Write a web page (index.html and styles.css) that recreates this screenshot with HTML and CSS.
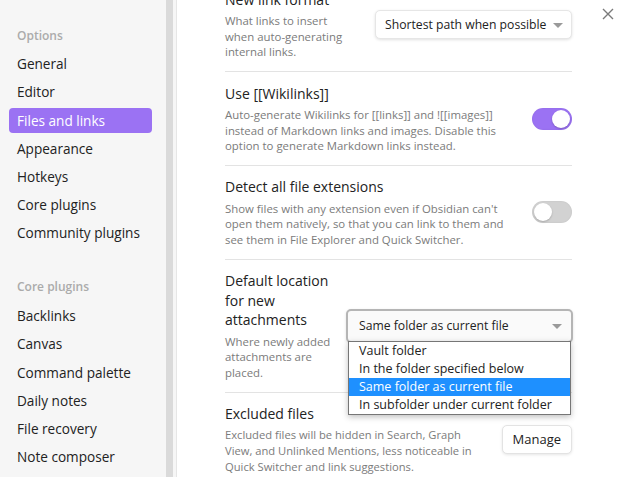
FILE: index.html
```html
<!DOCTYPE html>
<html>
<head>
<meta charset="utf-8">
<link rel="stylesheet" href="styles.css">
</head>
<body>
<div class="app">
  <nav class="sidebar">
    <div class="group">
      <div class="group-title">Options</div>
      <div class="nav-item">General</div>
      <div class="nav-item">Editor</div>
      <div class="nav-item active">Files and links</div>
      <div class="nav-item">Appearance</div>
      <div class="nav-item">Hotkeys</div>
      <div class="nav-item">Core plugins</div>
      <div class="nav-item">Community plugins</div>
    </div>
    <div class="group">
      <div class="group-title">Core plugins</div>
      <div class="nav-item">Backlinks</div>
      <div class="nav-item">Canvas</div>
      <div class="nav-item">Command palette</div>
      <div class="nav-item">Daily notes</div>
      <div class="nav-item">File recovery</div>
      <div class="nav-item">Note composer</div>
    </div>
  </nav>
  <div class="scrollbar"></div>
  <div class="gutter"></div>
  <main class="content">
    <div class="settings">
      <div class="setting first">
        <div class="info w1">
          <div class="name">New link format</div>
          <div class="desc">What links to insert when auto-generating internal links.</div>
        </div>
        <div class="control">
          <div class="select">Shortest path when possible<span class="caret"></span></div>
        </div>
      </div>
      <div class="setting">
        <div class="info">
          <div class="name">Use [[Wikilinks]]</div>
          <div class="desc">Auto-generate Wikilinks for [[links]] and ![[images]] instead of Markdown links and images. Disable this option to generate Markdown links instead.</div>
        </div>
        <div class="control">
          <div class="toggle on"><span class="knob"></span></div>
        </div>
      </div>
      <div class="setting">
        <div class="info">
          <div class="name">Detect all file extensions</div>
          <div class="desc">Show files with any extension even if Obsidian can't open them natively, so that you can link to them and see them in File Explorer and Quick Switcher.</div>
        </div>
        <div class="control">
          <div class="toggle"><span class="knob"></span></div>
        </div>
      </div>
      <div class="setting">
        <div class="info w4">
          <div class="name">Default location for new attachments</div>
          <div class="desc">Where newly added attachments are placed.</div>
        </div>
        <div class="control">
          <div class="select wide focused">Same folder as current file<span class="caret"></span>
            <ul class="options">
              <li>Vault folder</li>
              <li>In the folder specified below</li>
              <li class="selected">Same folder as current file</li>
              <li>In subfolder under current folder</li>
            </ul>
          </div>
        </div>
      </div>
      <div class="setting">
        <div class="info">
          <div class="name">Excluded files</div>
          <div class="desc lines">Excluded files will be hidden in Search, Graph<br>View, and Unlinked Mentions, less noticeable in<br>Quick Switcher and link suggestions.</div>
        </div>
        <div class="control">
          <button class="button">Manage</button>
        </div>
      </div>
    </div>
  </main>
  <button class="close" aria-label="Close">
    <svg width="12" height="12" viewBox="0 0 12 12"><path d="M1 1L11 11M11 1L1 11" stroke="#7a7a7a" stroke-width="1.4" fill="none"/></svg>
  </button>
</div>
</body>
</html>
```

FILE: styles.css
```css
html, body {
  margin: 0;
  padding: 0;
  width: 620px;
  height: 477px;
  overflow: hidden;
  background: #ffffff;
  font-family: "Open Sans", "Noto Sans", sans-serif;
  color: #222222;
}

.app {
  position: relative;
  display: flex;
  width: 620px;
  height: 477px;
  overflow: hidden;
}

.sidebar {
  width: 166px;
  box-sizing: border-box;
  padding: 0 14px 0 9px;
  background: #f6f6f6;
  flex: none;
}

.group + .group {
  margin-top: 6px;
}

.group-title {
  padding: 26.5px 8px 7.75px;
  font-size: 12px;
  line-height: 17px;
  font-weight: 600;
  color: #ababab;
}

.nav-item {
  padding: 4px 8px;
  line-height: 17.4px;
  font-size: 13.6px;
  margin-bottom: 2.8px;
  border-radius: 4px;
  color: #222222;
  white-space: nowrap;
}

.nav-item.active {
  background: #9b72f3;
  color: #ffffff;
}

.scrollbar {
  width: 7px;
  flex: none;
  background: #dadada;
}

.gutter {
  width: 3px;
  flex: none;
  background: #f6f6f6;
  border-right: 1px solid #e6e6e6;
}

.content {
  flex: 1;
  padding: 0 48px 0 48px;
  min-width: 0;
}

.settings {
  margin-top: -21.5px;
}

.setting {
  display: flex;
  align-items: center;
  gap: 12px;
  padding: 11.25px 0;
  border-top: 1px solid #e3e3e3;
}

.setting.first {
  border-top: none;
}

.info {
  flex: 1;
  min-width: 0;
}

.info.w1 {
  flex: none;
  width: 134px;
  margin-right: auto;
}

.name {
  font-size: 14px;
  line-height: 19.5px;
  color: #222222;
}

.desc {
  padding-top: 4px;
  font-size: 11.4px;
  line-height: 15.6px;
  color: #7b7b7b;
}

.desc.lines {
  white-space: nowrap;
  font-size: 11.2px;
}

.control {
  flex: none;
  display: flex;
  justify-content: flex-end;
}

.select {
  position: relative;
  box-sizing: border-box;
  width: 197px;
  height: 29px;
  padding: 0 28px 0 9px;
  font-size: 12.2px;
  line-height: 27px;
  background: #ffffff;
  border: 1px solid #e6e6e6;
  border-radius: 5px;
  box-shadow: 0 1px 3px rgba(0, 0, 0, 0.12);
  white-space: nowrap;
}

.select.wide {
  width: 227px;
  height: 34px;
  line-height: 30px;
  padding-left: 11px;
  border: 2px solid #b5b5b5;
  background: #fafafa;
  margin-right: -1px;
}

.caret {
  position: absolute;
  right: 8px;
  top: 50%;
  margin-top: -2px;
  width: 0;
  height: 0;
  border-left: 5px solid transparent;
  border-right: 5px solid transparent;
  border-top: 5px solid #9a9a9a;
}

.select.wide .caret {
  right: 9px;
}

.options {
  position: absolute;
  left: 0;
  top: 30px;
  width: 223px;
  box-sizing: border-box;
  margin: 0;
  padding: 0;
  list-style: none;
  background: #ffffff;
  border: 1px solid #767676;
  box-shadow: 0 2px 6px rgba(0, 0, 0, 0.25);
  z-index: 2;
}

.options li {
  height: 18px;
  line-height: 18px;
  padding-left: 10px;
  font-size: 12.5px;
  color: #222222;
}

.options li.selected {
  background: #1e90ff;
  color: #ffffff;
}

.toggle {
  position: relative;
  width: 40px;
  height: 22px;
  border-radius: 11px;
  background: #d2d2d2;
  box-shadow: inset 0 0 2px rgba(0, 0, 0, 0.08);
}

.toggle .knob {
  position: absolute;
  top: 2px;
  left: 2px;
  width: 18px;
  height: 18px;
  border-radius: 50%;
  background: #ffffff;
  box-shadow: 0 1px 2px rgba(0, 0, 0, 0.2);
}

.toggle.on {
  background: #9b72f3;
}

.toggle.on .knob {
  left: 20px;
}

.button {
  box-sizing: border-box;
  height: 29px;
  padding: 0 10px;
  font-family: inherit;
  font-size: 13px;
  color: #222222;
  background: #ffffff;
  border: 1px solid #e3e3e3;
  border-radius: 5px;
  box-shadow: 0 1px 3px rgba(0, 0, 0, 0.1);
}

.close {
  position: absolute;
  top: 8px;
  left: 602px;
  width: 12px;
  height: 12px;
  padding: 0;
  border: none;
  background: none;
  line-height: 0;
}
```
